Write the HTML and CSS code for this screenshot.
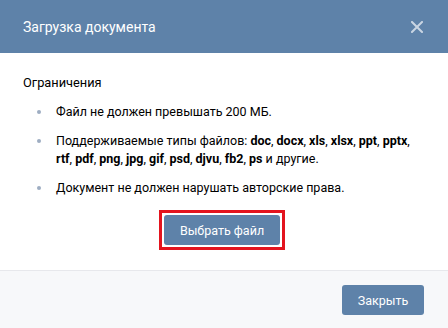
FILE: index.html
```html
<!DOCTYPE html>
<html lang="ru">
<head>
<meta charset="utf-8">
<link rel="stylesheet" href="styles.css">
</head>
<body>
<div class="box">
  <div class="box-header">
    <div class="box-title">Загрузка документа</div>
    <svg class="box-close" width="12" height="12" viewBox="0 0 12 12"><path d="M1 1L11 11M11 1L1 11" stroke="#c9d5e3" stroke-width="2" stroke-linecap="square"/></svg>
  </div>
  <div class="box-body">
    <div class="limits-title">Ограничения</div>
    <ul class="limits">
      <li>Файл не должен превышать 200 МБ.</li>
      <li><span>Поддерживаемые типы файлов: <b>doc</b>, <b>docx</b>, <b>xls</b>, <b>xlsx</b>, <b>ppt</b>, <b>pptx</b>, <b>rtf</b>, <b>pdf</b>, <b>png</b>, <b>jpg</b>, <b>gif</b>, <b>psd</b>, <b>djvu</b>, <b>fb2</b>, <b>ps</b> и другие.</span></li>
      <li>Документ не должен нарушать авторские права.</li>
    </ul>
    <div class="choose-wrap">
      <span class="highlight"><button class="btn btn-choose">Выбрать файл</button></span>
    </div>
  </div>
  <div class="box-footer">
    <button class="btn btn-close">Закрыть</button>
  </div>
</div>
</body>
</html>
```
FILE: styles.css
```css
html, body {
  margin: 0;
  padding: 0;
  background: #fff;
}
body {
  font-family: Roboto, "Open Sans", Arial, sans-serif;
  font-size: 13px;
  color: #000;
  width: 448px;
  height: 328px;
  overflow: hidden;
}
.box {
  display: flex;
  flex-direction: column;
}
.box-header {
  height: 53px;
  background: #5e82a9;
  display: flex;
  align-items: center;
  justify-content: space-between;
  padding: 0 25px 0 23px;
}
.box-title {
  color: #fff;
  font-size: 14px;
}
.box-close {
  display: block;
}
.box-body {
  padding: 21px 25px 20px 23px;
}
.limits-title {
  line-height: 18px;
  font-size: 12.8px;
}
.limits {
  list-style: none;
  margin: 11px 0 0;
  padding: 0;
  font-size: 12.5px;
}
.limits li {
  display: flex;
  line-height: 18px;
  margin-bottom: 11px;
}
.limits li:last-child {
  margin-bottom: 0;
}
.limits li::before {
  content: "";
  flex: none;
  width: 4px;
  height: 4px;
  border-radius: 50%;
  background: #9eadc2;
  margin: 7px 15px 0 14px;
}
.limits b {
  font-weight: 700;
}
.choose-wrap {
  margin-top: 13px;
  display: flex;
  justify-content: center;
}
.highlight {
  display: block;
  border: 3px solid #e3141e;
  padding: 2px;
  margin-left: -2px;
}
.btn {
  display: block;
  border: 0;
  border-radius: 3px;
  background: #5e82a9;
  color: #fff;
  font-family: Roboto, "Open Sans", Arial, sans-serif;
  font-size: 12.5px;
  height: 30px;
  padding: 0;
  cursor: pointer;
}
.btn-choose {
  width: 116px;
}
.box-footer {
  background: #f7f8fa;
  border-top: 1px solid #e7e8ec;
  padding: 14px 24px 15px;
  display: flex;
  justify-content: flex-end;
}
.btn-close {
  width: 82px;
}
```
